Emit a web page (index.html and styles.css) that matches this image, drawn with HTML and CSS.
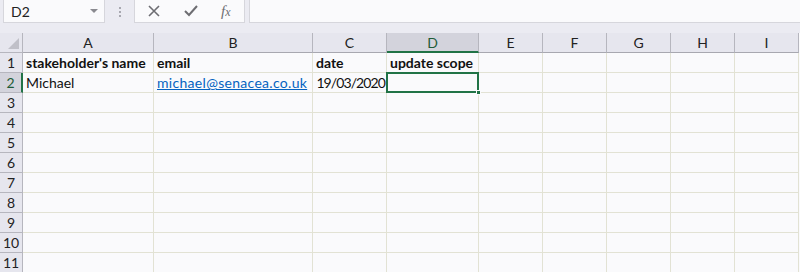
FILE: index.html
```html
<!DOCTYPE html>
<html lang="en">
<head>
    <meta charset="UTF-8">
    <title>Book1 - Excel</title>
    <link rel="stylesheet" href="styles.css">
</head>
<body>
    <div class="formula-bar">
        <div class="name-box">
            <span>D2</span>
            <span class="caret"></span>
        </div>
        <div class="grip">
            <span></span><span></span><span></span>
        </div>
        <div class="fx-buttons">
            <svg width="14" height="14" viewBox="0 0 14 14"><path d="M2 2 L12 12 M12 2 L2 12" stroke="#6d6d72" stroke-width="1.6" fill="none"/></svg>
            <svg width="16" height="14" viewBox="0 0 16 14"><path d="M2 7 L6 11 L14 2" stroke="#6d6d72" stroke-width="2" fill="none"/></svg>
            <span class="fx">f<i>x</i></span>
        </div>
        <div class="formula-input"></div>
    </div>

    <div class="sheet">
        <!-- column headers -->
        <div class="corner"><span class="tri"></span></div>
        <div class="col-head">A</div>
        <div class="col-head">B</div>
        <div class="col-head">C</div>
        <div class="col-head active">D</div>
        <div class="col-head">E</div>
        <div class="col-head">F</div>
        <div class="col-head">G</div>
        <div class="col-head">H</div>
        <div class="col-head">I</div>

        <!-- row 1 -->
        <div class="row-head">1</div>
        <div class="cell bold">stakeholder's name</div>
        <div class="cell bold">email</div>
        <div class="cell bold">date</div>
        <div class="cell bold">update scope</div>
        <div class="cell"></div><div class="cell"></div><div class="cell"></div><div class="cell"></div><div class="cell"></div>

        <!-- row 2 -->
        <div class="row-head active">2</div>
        <div class="cell">Michael</div>
        <div class="cell link">michael@senacea.co.uk</div>
        <div class="cell date">19/03/2020</div>
        <div class="cell selected"><span class="handle"></span></div>
        <div class="cell"></div><div class="cell"></div><div class="cell"></div><div class="cell"></div><div class="cell"></div>
    </div>
    <div class="sheet" id="emptyRows"></div>

    <script>
        // fill rows 3 to 11 with empty cells
        const emptyRows = document.getElementById('emptyRows');
        for (let r = 3; r <= 11; r++) {
            const head = document.createElement('div');
            head.className = 'row-head';
            head.textContent = r;
            emptyRows.appendChild(head);
            for (let c = 0; c < 9; c++) {
                const cell = document.createElement('div');
                cell.className = 'cell';
                emptyRows.appendChild(cell);
            }
        }
    </script>
</body>
</html>
```

FILE: styles.css
```css
* {
    margin: 0;
    padding: 0;
    box-sizing: border-box;
}

body {
    font-family: 'Lato', 'Liberation Sans', sans-serif;
    background: #ebebf2;
    color: #111;
    overflow: hidden;
    width: 800px;
    height: 272px;
}

/* ---------- formula bar ---------- */

.formula-bar {
    display: flex;
    height: 33px;
    padding-bottom: 10px;
}

.name-box {
    width: 102px;
    margin-left: 3px;
    background: #fafafc;
    border: 1px solid #d6d6dc;
    border-top: none;
    display: flex;
    align-items: center;
    justify-content: space-between;
    padding: 0 6px 0 7px;
    font-size: 14px;
    color: #222;
}

.caret {
    width: 0;
    height: 0;
    border-left: 4px solid transparent;
    border-right: 4px solid transparent;
    border-top: 4px solid #8a8a90;
}

.grip {
    width: 29px;
    display: flex;
    flex-direction: column;
    align-items: center;
    justify-content: center;
    gap: 2px;
}

.grip span {
    width: 2px;
    height: 2px;
    background: #a8a8b0;
}

.fx-buttons {
    width: 111px;
    background: #fafafc;
    border: 1px solid #d6d6dc;
    border-top: none;
    display: flex;
    align-items: center;
    gap: 22px;
    padding-left: 12px;
}

.fx {
    font-family: 'Liberation Serif', serif;
    font-style: italic;
    font-size: 15px;
    color: #6d6d72;
}

.fx i {
    font-size: 12px;
}

.formula-input {
    flex: 1;
    margin-left: 4px;
    background: #fafafc;
    border: 1px solid #d6d6dc;
    border-top: none;
    border-right: none;
}

/* ---------- grid ---------- */

.sheet {
    display: grid;
    grid-template-columns: 23px 131px 159px 74px 92px 64px 64px 64px 64px 64px;
    grid-auto-rows: 20px;
    background: #fafafc;
}

.corner {
    background: #e6e6ee;
    border-right: 1px solid #b6b6be;
    border-bottom: 1px solid #b6b6be;
    position: relative;
}

.tri {
    position: absolute;
    right: 3px;
    bottom: 3px;
    width: 0;
    height: 0;
    border-left: 11px solid transparent;
    border-bottom: 11px solid #c0c0c8;
}

.col-head {
    background: #e6e6ee;
    border-right: 1px solid #b6b6be;
    border-bottom: 1px solid #a8a8b0;
    display: flex;
    align-items: center;
    justify-content: center;
    font-size: 14px;
    color: #222;
}

.col-head.active {
    background: #d3d3dc;
    border-bottom: 2px solid #217346;
    color: #1e5c38;
}

.row-head {
    background: #e6e6ee;
    border-right: 1px solid #b6b6be;
    border-bottom: 1px solid #b6b6be;
    display: flex;
    align-items: center;
    justify-content: center;
    font-size: 14px;
    color: #222;
}

.row-head.active {
    background: #d3d3dc;
    border-right: 2px solid #217346;
    color: #1e5c38;
}

.cell {
    border-right: 1px solid #e2e2d4;
    border-bottom: 1px solid #e2e2d4;
    font-size: 14px;
    padding: 0 3px;
    display: flex;
    align-items: flex-end;
    padding-bottom: 1px;
    white-space: nowrap;
}

.cell.bold {
    font-weight: bold;
}

.cell.link {
    color: #0563c1;
    text-decoration: underline;
    letter-spacing: 0.3px;
}

.cell.date {
    justify-content: flex-end;
    padding-right: 1px;
    letter-spacing: -0.9px;
}

.cell.selected {
    position: relative;
}

.cell.selected::after {
    content: '';
    position: absolute;
    left: -1px;
    top: -1px;
    right: -1px;
    bottom: -1px;
    border: 2px solid #217346;
}

.handle {
    position: absolute;
    right: -3px;
    bottom: -3px;
    width: 5px;
    height: 5px;
    background: #217346;
    border: 1px solid #fafafc;
    z-index: 1;
}
```
